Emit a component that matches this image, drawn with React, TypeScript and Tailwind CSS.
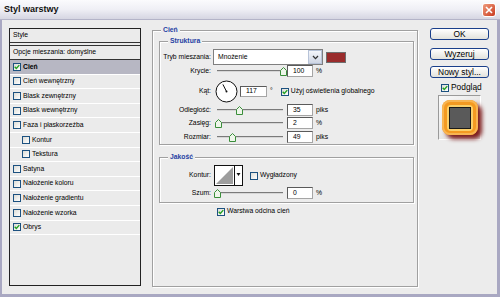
import React from "react";

// Photoshop "Styl warstwy" dialog, XP look

function Check({ on = false }: { on?: boolean }) {
  return (
    <span className="w-[8px] h-[8px] shrink-0 border border-[#1c5180] bg-gradient-to-br from-[#dcdcd6] to-white flex items-center justify-center">
      {on && (
        <svg width="6" height="6" viewBox="0 0 6 6">
          <path d="M0.7 2.8 L2.3 4.5 L5.3 1.1" fill="none" stroke="#21a121" strokeWidth="1.4" />
        </svg>
      )}
    </span>
  );
}

function Slider({ at }: { at: number }) {
  return (
    <div className="relative w-[66px] h-[2px] shrink-0 border-t border-[#7a7a7a] bg-[#d6d6d6]">
      <svg className="absolute top-[-4px]" style={{ left: at - 3.5 }} width="7" height="9" viewBox="0 0 7 9">
        <path d="M0.5 3.5 L3.5 0.5 L6.5 3.5 L6.5 8.5 L0.5 8.5 Z" fill="#eef6ea" stroke="#3a8e3a" />
      </svg>
    </div>
  );
}

function Field({ value }: { value: string }) {
  return (
    <span className="ml-[4px] w-[26px] h-[12px] shrink-0 bg-white border border-[#a5a5a5] border-t-[#5a5a5a] border-l-[#5a5a5a] pl-[5px] flex items-center">
      {value}
    </span>
  );
}

function SliderRow({ label, at, value, unit, mt }: { label: string; at: number; value: string; unit: string; mt: string }) {
  return (
    <div className={"flex items-center h-[12px] " + mt}>
      <span className="w-[51px] shrink-0 text-right">{label}</span>
      <span className="ml-[6px]">
        <Slider at={at} />
      </span>
      <Field value={value} />
      <span className="ml-[3px]">{unit}</span>
    </div>
  );
}

function Legend({ children }: { children: React.ReactNode }) {
  return (
    <span className="self-start ml-[8px] px-[2px] -mt-[5px] h-[8px] leading-[8px] bg-[#ececec] text-[#1f3fa3] font-bold">
      {children}
    </span>
  );
}

const styles: { name: string; on?: boolean; sel?: boolean; sub?: boolean }[] = [
  { name: "Cień", on: true, sel: true },
  { name: "Cień wewnętrzny" },
  { name: "Blask zewnętrzny" },
  { name: "Blask wewnętrzny" },
  { name: "Faza i płaskorzeźba" },
  { name: "Kontur", sub: true },
  { name: "Tekstura", sub: true },
  { name: "Satyna" },
  { name: "Nałożenie koloru" },
  { name: "Nałożenie gradientu" },
  { name: "Nałożenie wzorka" },
  { name: "Obrys", on: true },
];

export default function App() {
  return (
    <div className="w-[500px] h-[297px] flex flex-col overflow-hidden font-['Liberation_Sans',Arial,sans-serif] text-[6.8px] text-black bg-[#ececec]">
      {/* title bar */}
      <div className="h-[20px] shrink-0 flex items-center justify-between pl-[4px] pr-[4px] bg-gradient-to-b from-[#fbfbfd] via-[#efeff5] to-[#d6d6e2] border-b border-[#b4b4c8]">
        <span className="text-[9px] font-bold text-[#111]">Styl warstwy</span>
        <span className="w-[14px] h-[14px] rounded-[3px] border border-white bg-gradient-to-br from-[#ee9a7c] to-[#c8361a] flex items-center justify-center">
          <svg width="8" height="8" viewBox="0 0 8 8">
            <path d="M1 1 L7 7 M7 1 L1 7" stroke="#fff" strokeWidth="1.6" />
          </svg>
        </span>
      </div>

      {/* body */}
      <div className="flex-1 flex border-l-[2px] border-r-[3px] border-b-[3px] border-[#a9a8c2]">
        {/* style list */}
        <div className="ml-[7px] mt-[8px] w-[132px] h-[258px] shrink-0 border border-[#222] bg-[#ebebeb] flex flex-col">
          <div className="h-[14px] pl-[3px] flex items-center border-b border-[#333]">Style</div>
          <div className="h-[2px]" />
          <div className="h-[15px] pl-[3px] flex items-center border-t border-[#333] border-b border-[#9a9a9a]">
            Opcje mieszania: domyślne
          </div>
          {styles.map((s) => (
            <div
              key={s.name}
              className={
                "h-[14.6px] shrink-0 flex items-center border-b border-white " +
                (s.sub ? "pl-[12px] " : "pl-[3px] ") +
                (s.sel ? "bg-[#b7b7c3] font-bold" : "")
              }
            >
              <Check on={s.on} />
              <span className="ml-[2px]">{s.name}</span>
            </div>
          ))}
        </div>

        {/* Cień group */}
        <div className="ml-[11px] mt-[10px] w-[266px] h-[257px] shrink-0 border border-[#a0a0a0] shadow-[inset_1px_1px_0_#fff,1px_1px_0_#fff] flex flex-col">
          <Legend>Cień</Legend>

          <div className="ml-[6px] mt-[7px] w-[255px] h-[104px] border border-[#a0a0a0] shadow-[inset_1px_1px_0_#fff,1px_1px_0_#fff] flex flex-col">
            <Legend>Struktura</Legend>

            <div className="flex items-center h-[16px] mt-[4px]">
              <span className="w-[51px] shrink-0 text-right">Tryb mieszania:</span>
              <div className="ml-[2px] w-[110px] h-[16px] bg-white border border-[#7f7f7f] flex items-center">
                <span className="flex-1 pl-[4px]">Mnożenie</span>
                <span className="w-[14px] h-[14px] border border-[#b7c3d8] bg-gradient-to-b from-[#f4f6fb] to-[#cfd6e4] flex items-center justify-center">
                  <svg width="7" height="5" viewBox="0 0 7 5">
                    <path d="M1 1 L3.5 3.6 L6 1" fill="none" stroke="#333" strokeWidth="1.3" />
                  </svg>
                </span>
              </div>
              <span className="ml-[3px] w-[20px] h-[11px] bg-[#9a2c2c] border border-[#6e6e6e]" />
            </div>

            <SliderRow label="Krycie:" at={66} value="100" unit="%" mt="mt-0" />

            <div className="flex items-center h-[23px] mt-[3px]">
              <span className="w-[51px] shrink-0 text-right">Kąt:</span>
              <svg className="ml-[4px] shrink-0" width="23" height="23" viewBox="0 0 23 23">
                <circle cx="11.5" cy="11.5" r="10.5" fill="#fff" stroke="#111" />
                <path d="M11.5 11.5 L7.9 4.4" stroke="#111" strokeWidth="1" />
                <circle cx="11.5" cy="11.5" r="1" fill="#111" />
              </svg>
              <span className="ml-[2px] w-[27px] h-[11px] shrink-0 bg-white border border-[#a5a5a5] border-t-[#5a5a5a] border-l-[#5a5a5a] pl-[5px] flex items-center">
                117
              </span>
              <span className="ml-[3px] self-start mt-[6px]">°</span>
              <span className="ml-[8px]">
                <Check on />
              </span>
              <span className="ml-[2px]">Użyj oświetlenia globalnego</span>
            </div>

            <SliderRow label="Odległość:" at={22} value="35" unit="piks" mt="mt-[1px]" />
            <SliderRow label="Zasięg:" at={1} value="2" unit="%" mt="mt-[1px]" />
            <SliderRow label="Rozmiar:" at={15} value="49" unit="piks" mt="mt-[2px]" />
          </div>

          <div className="ml-[6px] mt-[12px] w-[255px] h-[46px] border border-[#a0a0a0] shadow-[inset_1px_1px_0_#fff,1px_1px_0_#fff] flex flex-col">
            <Legend>Jakość</Legend>
            <div className="flex items-center h-[21px] mt-[4px]">
              <span className="w-[51px] shrink-0 text-right">Kontur:</span>
              <svg className="ml-[3px] shrink-0" width="29" height="21" viewBox="0 0 29 21">
                <rect x="0.5" y="0.5" width="28" height="20" fill="#fff" stroke="#111" />
                <path d="M2 19 L19 2 L19 19 Z" fill="#9d9d9d" />
                <path d="M20.5 1 L20.5 20" stroke="#111" />
                <path d="M22.5 8 L26.5 8 L24.5 11 Z" fill="#111" />
              </svg>
              <span className="ml-[7px]">
                <Check />
              </span>
              <span className="ml-[2px]">Wygładzony</span>
            </div>
            <SliderRow label="Szum:" at={0} value="0" unit="%" mt="mt-[1px]" />
          </div>

          <div className="flex items-center h-[9px] mt-[4px] ml-[64px]">
            <Check on />
            <span className="ml-[2px]">Warstwa odcina cień</span>
          </div>
        </div>

        {/* buttons + preview */}
        <div className="ml-[12px] mt-[8px] w-[59px] shrink-0 flex flex-col text-[8.4px]">
          <button className="w-[59px] h-[12px] rounded-[3px] border border-[#1a3f8a] bg-gradient-to-b from-white to-[#e2e2dc] leading-none flex items-center justify-center">
            OK
          </button>
          <button className="mt-[8px] w-[59px] h-[12px] rounded-[3px] border border-[#1a3f8a] bg-gradient-to-b from-white to-[#e2e2dc] leading-none flex items-center justify-center">
            Wyzeruj
          </button>
          <button className="mt-[6px] w-[59px] h-[12px] rounded-[3px] border border-[#1a3f8a] bg-gradient-to-b from-white to-[#e2e2dc] leading-none flex items-center justify-center">
            Nowy styl...
          </button>
          <div className="mt-[5px] h-[9px] ml-[11px] flex items-center">
            <Check on />
            <span className="ml-[2px]">Podgląd</span>
          </div>
          <div className="mt-[3px] ml-[8px] w-[43px] h-[45px] border border-[#9a9a9a] border-r-white border-b-white bg-gradient-to-br from-[#fafafa] to-[#d8d8d8] flex items-center justify-center">
            <div className="w-[36px] h-[35px] rounded-[8px] bg-[#f49a22] shadow-[inset_0_0_0_2px_#f8b552,4px_4px_4px_#7d1d1d] flex items-center justify-center">
              <div className="w-[26px] h-[26px] rounded-[4px] bg-[#fbd06a] flex items-center justify-center">
                <div className="w-[22px] h-[22px] border border-[#1a1a1a] bg-[#5a5a5a]" />
              </div>
            </div>
          </div>
        </div>
      </div>
    </div>
  );
}
